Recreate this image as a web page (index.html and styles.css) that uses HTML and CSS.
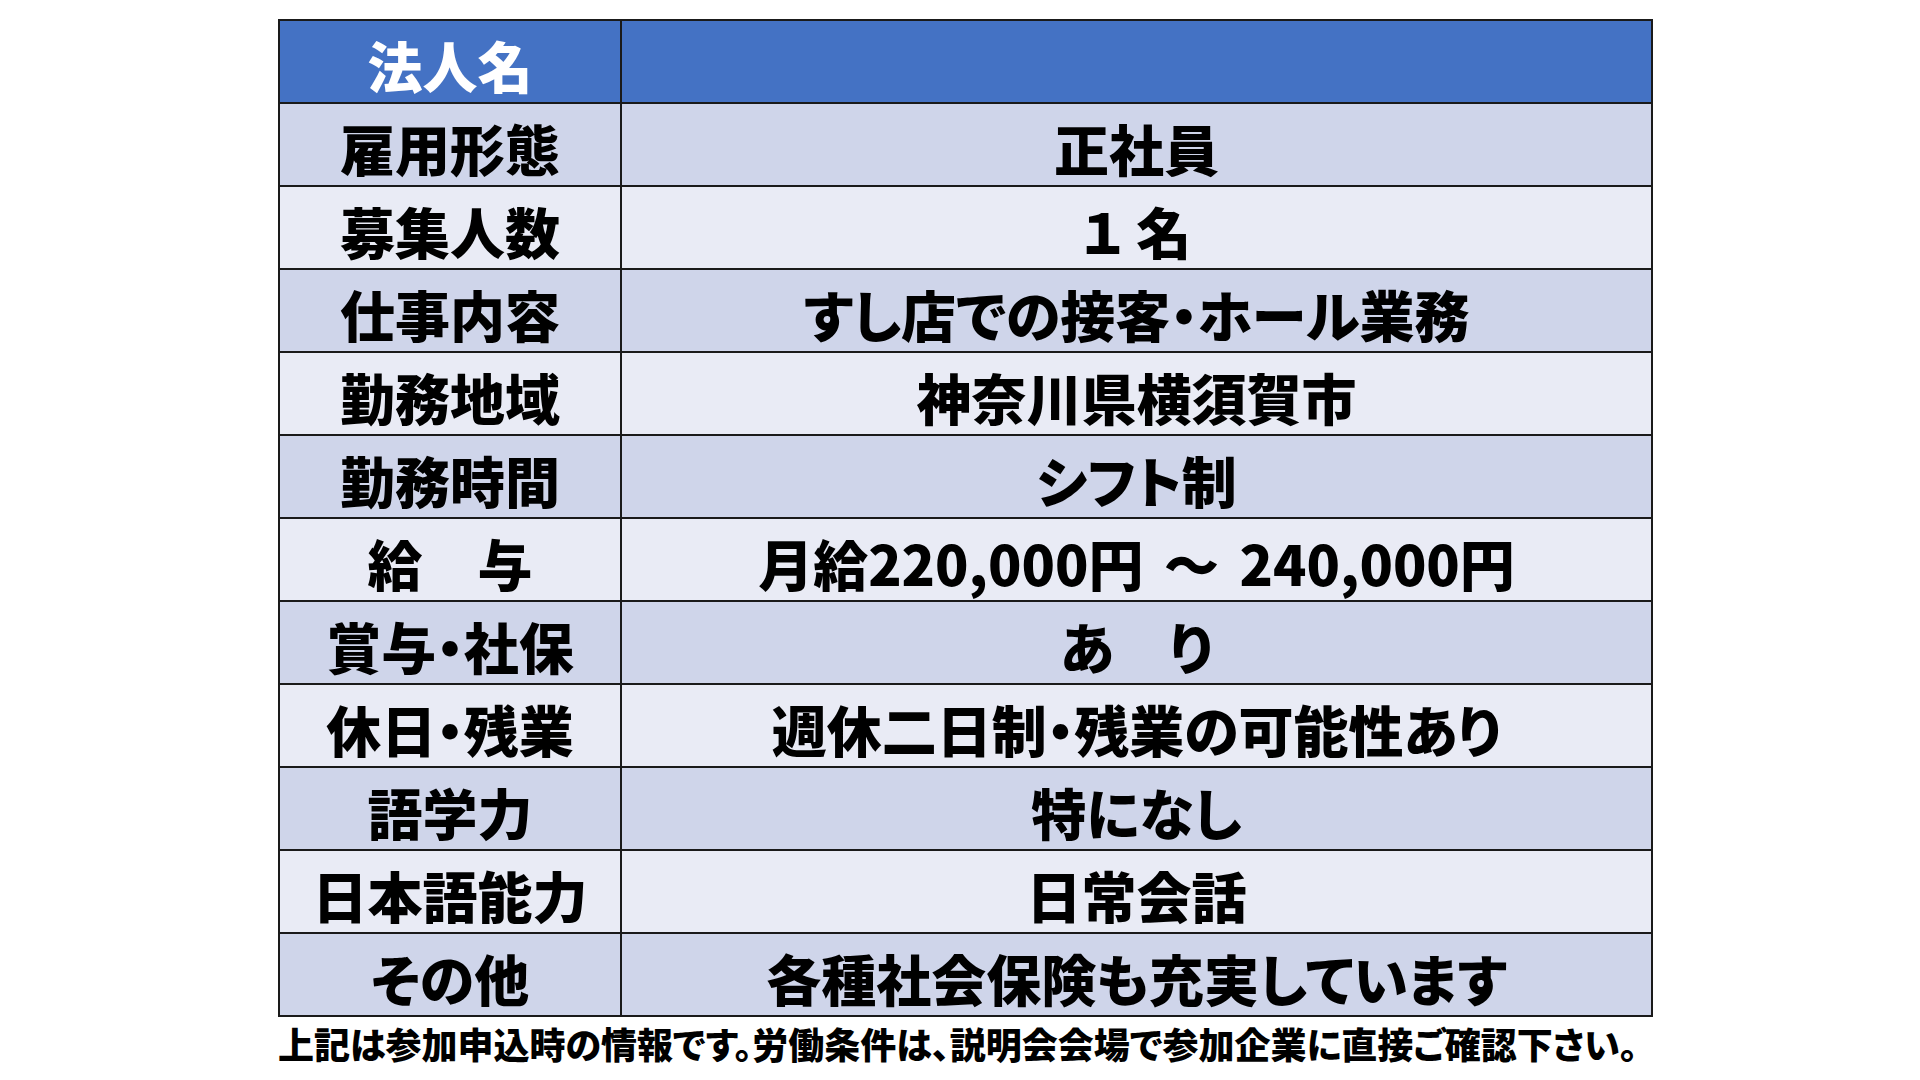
FILE: index.html
```html
<!DOCTYPE html>
<html lang="ja">
<head>
<meta charset="utf-8">
<title>求人情報</title>
<link rel="stylesheet" href="styles.css">
</head>
<body>
<div class="page">
  <table class="job">
    <tr class="head"><th>法人名</th><td></td></tr>
    <tr class="dark"><th>雇用形態</th><td>正社員</td></tr>
    <tr class="light"><th>募集人数</th><td>１ 名</td></tr>
    <tr class="dark"><th>仕事内容</th><td>すし店での接客・ホール業務</td></tr>
    <tr class="light"><th>勤務地域</th><td>神奈川県横須賀市</td></tr>
    <tr class="dark"><th>勤務時間</th><td>シフト制</td></tr>
    <tr class="light"><th>給　与</th><td class="pay">月給220,000円 ～ 240,000円</td></tr>
    <tr class="dark"><th>賞与・社保</th><td>あ　り</td></tr>
    <tr class="light"><th>休日・残業</th><td>週休二日制・残業の可能性あり</td></tr>
    <tr class="dark"><th>語学力</th><td>特になし</td></tr>
    <tr class="light"><th>日本語能力</th><td>日常会話</td></tr>
    <tr class="dark"><th>その他</th><td>各種社会保険も充実しています</td></tr>
  </table>
  <p class="note">上記は参加申込時の情報です。労働条件は、説明会会場で参加企業に直接ご確認下さい。</p>
</div>
</body>
</html>
```
FILE: styles.css
```css
html, body {
  margin: 0;
  padding: 0;
  background: #ffffff;
}
body {
  font-family: "Noto Sans CJK JP", "Noto Sans", sans-serif;
  color: #000;
  font-feature-settings: "palt";
}
.page {
  width: 1920px;
  height: 1080px;
  padding: 19px 0 0 278px;
  box-sizing: border-box;
}
.job {
  border-collapse: collapse;
  width: 1375px;
  table-layout: fixed;
}
.job th, .job td {
  border: 2px solid #1a1a1a;
  height: 75px;
  padding: 6px 0 0 0;
  text-align: center;
  vertical-align: middle;
  font-weight: 900;
  font-size: 55px;
  line-height: 1;
  white-space: nowrap;
}
.job th {
  width: 340px;
}
.job td.pay {
  word-spacing: 8px;
}
.head th, .head td {
  background: #4472c4;
  color: #ffffff;
}
.dark th, .dark td {
  background: #cfd5ea;
}
.light th, .light td {
  background: #e9ebf5;
}
.note {
  margin: 6px 0 0 0;
  font-weight: 900;
  font-size: 36px;
  line-height: 1.15;
  white-space: nowrap;
}
```
